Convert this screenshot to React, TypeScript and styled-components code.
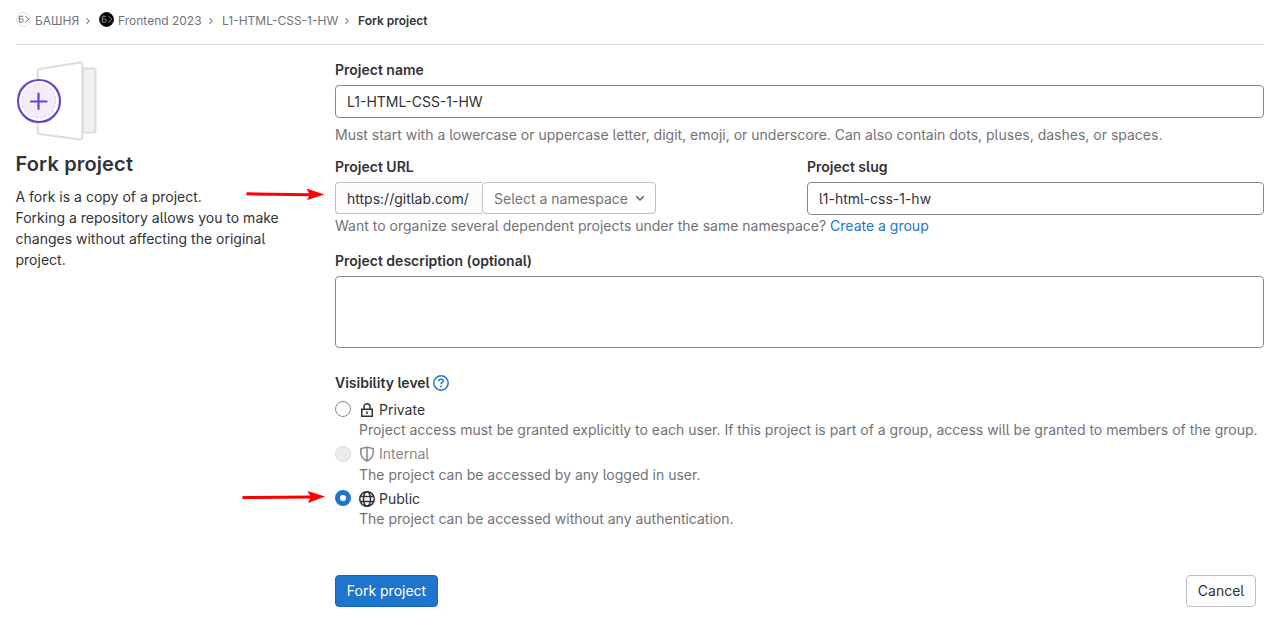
import React from "react";
import styled, { createGlobalStyle } from "styled-components";

const GlobalStyle = createGlobalStyle`
  *, *::before, *::after { box-sizing: border-box; }
  body {
    margin: 0;
    background: #fff;
    color: #333238;
    font-family: Inter, "Noto Sans", sans-serif;
    font-size: 14px;
    line-height: 20px;
    font-feature-settings: "cv05";
  }
  input, textarea, button { font: inherit; color: inherit; letter-spacing: inherit; font-feature-settings: inherit; }
`;

const Page = styled.div`
  position: relative;
  width: 1282px;
  height: 628px;
  padding: 0 18px 0 16px;
  overflow: hidden;
`;

const Breadcrumbs = styled.nav`
  display: flex;
  align-items: center;
  height: 45px;
  padding-bottom: 2px;
  border-bottom: 1px solid #dcdcde;
  font-size: 12px;
  line-height: 16px;
  color: #737278;
`;

const Crumb = styled.span<{ $current?: boolean; $width: number }>`
  display: flex;
  align-items: center;
  gap: 4px;
  width: ${(p) => p.$width}px;
  white-space: nowrap;
  font-weight: ${(p) => (p.$current ? 600 : 400)};
  color: ${(p) => (p.$current ? "#333238" : "#737278")};
`;

const Avatar = styled.svg`
  flex: none;
  width: 15px;
  height: 15px;
  margin: -3px 0 0 0;
`;

const Separator = styled.svg`
  flex: none;
  width: 20px;
  height: 8px;
  margin-top: 0;
`;

const Columns = styled.div`
  display: grid;
  grid-template-columns: 319px 1fr;
`;

const Intro = styled.aside`
  padding-top: 15px;
`;

const Illustration = styled.svg`
  display: block;
  width: 82px;
  height: 82px;
`;

const Title = styled.h4`
  margin: 10px 0 0 -0.5px;
  font-size: 20px;
  line-height: 24px;
  font-weight: 600;
  letter-spacing: 0.14px;
`;

const IntroText = styled.p`
  margin: 10px 0 0 -0.5px;
  line-height: 21px;
`;

const Form = styled.form`
  display: flex;
  flex-direction: column;
  padding-top: 17px;
`;

const Label = styled.div<{ $top?: number }>`
  display: flex;
  align-items: center;
  height: 16px;
  margin-top: ${(p) => p.$top ?? 0}px;
  font-weight: 600;
`;

const TextInput = styled.input`
  display: block;
  width: 100%;
  height: 33px;
  margin-top: 7px;
  padding: 0 11px 1px;
  border: 1px solid #89888d;
  border-radius: 4px;
  background: #fff;
  outline: none;
`;

const HelpText = styled.div<{ $top: number }>`
  margin-top: ${(p) => p.$top}px;
  height: 20px;
  color: #737278;
  white-space: nowrap;
`;

const Link = styled.a`
  color: #1f75cb;
`;

const FieldRow = styled.div`
  display: grid;
  grid-template-columns: 457px 457px;
  column-gap: 15px;
  margin-top: 14px;
`;

const UrlGroup = styled.div`
  display: flex;
  height: 32px;
  margin-top: 7px;
`;

const UrlPrefix = styled.span`
  display: flex;
  align-items: center;
  width: 147px;
  padding: 2px 0 0 11px;
  border: 1px solid #bfbfc3;
  border-right: 0;
  border-radius: 4px 0 0 4px;
  background: #fbfafd;
`;

const NamespaceButton = styled.button`
  display: flex;
  align-items: center;
  justify-content: space-between;
  width: 174px;
  padding: 2px 9px 0 11px;
  border: 1px solid #bfbfc3;
  border-radius: 4px;
  background: #fff;
  color: #737278;
`;

const TextArea = styled.textarea`
  display: block;
  width: 100%;
  height: 72px;
  margin: 7px 0 27px;
  border: 1px solid #89888d;
  border-radius: 4px;
  resize: none;
`;

const HelpIcon = styled.svg`
  width: 16px;
  height: 16px;
  margin-left: 3px;
`;

const Options = styled.div`
  margin-top: 8px;
`;

const Option = styled.div<{ $height: number }>`
  display: grid;
  grid-template-columns: 24px 1fr;
  height: ${(p) => p.$height}px;
`;

const Radio = styled.span<{ $state: "off" | "disabled" | "on" }>`
  width: 16px;
  height: 16px;
  margin-top: 2px;
  border-radius: 50%;
  border: ${(p) =>
    p.$state === "on" ? "5px solid #1f75cb" : p.$state === "off" ? "1px solid #89888d" : "1px solid #dcdcde"};
  background: ${(p) => (p.$state === "disabled" ? "#ececef" : "#fff")};
`;

const OptionName = styled.div<{ $muted?: boolean }>`
  display: flex;
  align-items: center;
  gap: 4px;
  height: 21px;
  padding-bottom: ${(p) => (p.$muted ? 1 : 0)}px;
  color: ${(p) => (p.$muted ? "#89888d" : "#333238")};
`;

const OptionIcon = styled.svg`
  width: 16px;
  height: 16px;
  fill: none;
  stroke: currentColor;
  stroke-width: 1.5;
`;

const Actions = styled.div`
  display: flex;
  justify-content: space-between;
  margin-top: 46px;
  padding-right: 8px;
`;

const Button = styled.button<{ $primary?: boolean }>`
  height: 32px;
  width: ${(p) => (p.$primary ? 103 : 70)}px;
  padding: 0;
  border: 1px solid ${(p) => (p.$primary ? "#1068bf" : "#bfbfc3")};
  border-radius: 4px;
  background: ${(p) => (p.$primary ? "#1f75cb" : "#fff")};
  color: ${(p) => (p.$primary ? "#fff" : "#333238")};
`;

const Pointer = styled.svg<{ $left: number; $top: number }>`
  position: absolute;
  left: ${(p) => p.$left}px;
  top: ${(p) => p.$top}px;
  width: 84px;
  height: 14px;
`;

const Chevron = () => (
  <Separator viewBox="0 0 20 8" fill="none" stroke="#89888d" strokeWidth="1.1">
    <path d="M7.4 1.2 10.2 4 7.4 6.8" />
  </Separator>
);

const GroupAvatar = ({ dark }: { dark?: boolean }) => (
  <Avatar viewBox="0 0 14 14" fill="none">
    <circle cx="7" cy="7" r="6.5" fill={dark ? "#050505" : "#fff"} stroke={dark ? "#050505" : "#dcdcde"} strokeWidth="0.8" />
    <path
      d="M6.7 4H3v5.500h2.200a1.600 1.600 0 0 0 0-3.200H3M8.600 3.700 12 6.700 8.600 9.700"
      stroke={dark ? "#8a8a8a" : "#66656b"}
      strokeWidth="0.9"
    />
  </Avatar>
);

export default function App() {
  return (
    <Page>
      <GlobalStyle />
      <Breadcrumbs>
        <Crumb $width={63}><GroupAvatar />БАШНЯ</Crumb>
        <Chevron />
        <Crumb $width={103}><GroupAvatar dark />Frontend 2023</Crumb>
        <Chevron />
        <Crumb $width={116}>L1-HTML-CSS-1-HW</Crumb>
        <Chevron />
        <Crumb $width={80} $current>Fork project</Crumb>
      </Breadcrumbs>
      <Columns>
        <Intro>
          <Illustration viewBox="0.5 0 82 82" fill="none">
            <path d="M67 8.500h11a2 2 0 0 1 2 2v60a2 2 0 0 1-2 2H67z" fill="#f0f0f0" stroke="#dcdcdc" strokeWidth="2" />
            <path d="M24 9 64.500 2.500a2 2 0 0 1 2.300 2v73a2 2 0 0 1-2.300 2L24 74a2 2 0 0 1-1.700-2V11a2 2 0 0 1 1.700-2z" fill="#fff" stroke="#dcdcdc" strokeWidth="2" />
            <circle cx="23.500" cy="41" r="21" fill="#fff" stroke="#6b45c6" strokeWidth="2.200" />
            <circle cx="23.500" cy="41" r="16.700" fill="#f1edfb" stroke="#c9bdec" strokeWidth="0.700" strokeDasharray="3 1.500" />
            <path d="M23 33.500v15.500M15.500 41.500h15.500" stroke="#6b45c6" strokeWidth="2.200" strokeLinecap="round" />
          </Illustration>
          <Title>Fork project</Title>
          <IntroText>
            A fork is a copy of a project.
            <br />
            Forking a repository allows you to make
            <br />
            changes without affecting the original
            <br />
            project.
          </IntroText>
        </Intro>
        <Form onSubmit={(e) => e.preventDefault()}>
          <Label>Project name</Label>
          <TextInput defaultValue="L1-HTML-CSS-1-HW" />
          <HelpText $top={7}>
            Must start with a lowercase or uppercase letter, digit, emoji, or underscore. Can also contain dots, pluses, dashes, or spaces.
          </HelpText>
          <FieldRow>
            <div>
              <Label>Project URL</Label>
              <UrlGroup>
                <UrlPrefix>https://gitlab.com/</UrlPrefix>
                <NamespaceButton type="button">
                  Select a namespace
                  <svg width="12" height="12" viewBox="0 0 12 12" fill="none" stroke="#626168" strokeWidth="1.600">
                    <path d="m2.200 3.300 3.800 3.700 3.800-3.700" />
                  </svg>
                </NamespaceButton>
              </UrlGroup>
            </div>
            <div>
              <Label>Project slug</Label>
              <TextInput defaultValue="l1-html-css-1-hw" />
            </div>
          </FieldRow>
          <HelpText $top={1}>
            Want to organize several dependent projects under the same namespace? <Link>Create a group</Link>
          </HelpText>
          <Label $top={17}>Project description (optional)</Label>
          <TextArea />
          <Label>
            Visibility level
            <HelpIcon viewBox="0 0 16 16" fill="none" stroke="#1f75cb" strokeWidth="1.500">
              <circle cx="8" cy="8" r="7.200" />
              <path d="M5.800 6.300c0-1.200 1-2 2.200-2s2.200.8 2.200 1.900c0 1.500-2.200 1.500-2.200 3" />
              <circle cx="8" cy="11.400" r=".9" fill="#1f75cb" stroke="none" />
            </HelpIcon>
          </Label>
          <Options>
            <Option $height={45}>
              <Radio $state="off" />
              <div>
                <OptionName>
                  <OptionIcon viewBox="0 0 16 16">
                    <path d="M2.750 7.250h10.500v7H2.750zM5 7V4.700a3 3 0 0 1 6 0V7M8 9.500v2.500" />
                  </OptionIcon>
                  Private
                </OptionName>
                <HelpText $top={0}>
                  Project access must be granted explicitly to each user. If this project is part of a group, access will be granted to members of the group.
                </HelpText>
              </div>
            </Option>
            <Option $height={44}>
              <Radio $state="disabled" />
              <div>
                <OptionName $muted>
                  <OptionIcon viewBox="0 0 16 16">
                    <path d="M8 1.300 14.200 2.600v4.200c0 3.700-2.500 6.500-6.200 8.200-3.700-1.700-6.200-4.500-6.200-8.200V2.600zM8 1.300V15" />
                  </OptionIcon>
                  Internal
                </OptionName>
                <HelpText $top={0}>The project can be accessed by any logged in user.</HelpText>
              </div>
            </Option>
            <Option $height={41}>
              <Radio $state="on" />
              <div>
                <OptionName>
                  <OptionIcon viewBox="0 0 16 16">
                    <circle cx="8" cy="8" r="7.250" />
                    <ellipse cx="8" cy="8" rx="3.500" ry="7.250" />
                    <path d="M1.500 5.500h13M1.500 10.500h13" />
                  </OptionIcon>
                  Public
                </OptionName>
                <HelpText $top={0}>The project can be accessed without any authentication.</HelpText>
              </div>
            </Option>
          </Options>
          <Actions>
            <Button $primary>Fork project</Button>
            <Button type="button">Cancel</Button>
          </Actions>
        </Form>
      </Columns>
      <Pointer $left={244} $top={187} viewBox="0 0 84 14">
        <path d="M2.500 5.300 65 6.200 62.500 1.500 80.500 7.500 63 13 65 9.200 2.500 8.300z" fill="#f00" />
      </Pointer>
      <Pointer $left={241} $top={490} viewBox="0 0 84 14">
        <path d="M1.500 6 69 5.500 66.500 1 84 6.500 67 13 69 8.500 1.500 9z" fill="#f00" />
      </Pointer>
    </Page>
  );
}
